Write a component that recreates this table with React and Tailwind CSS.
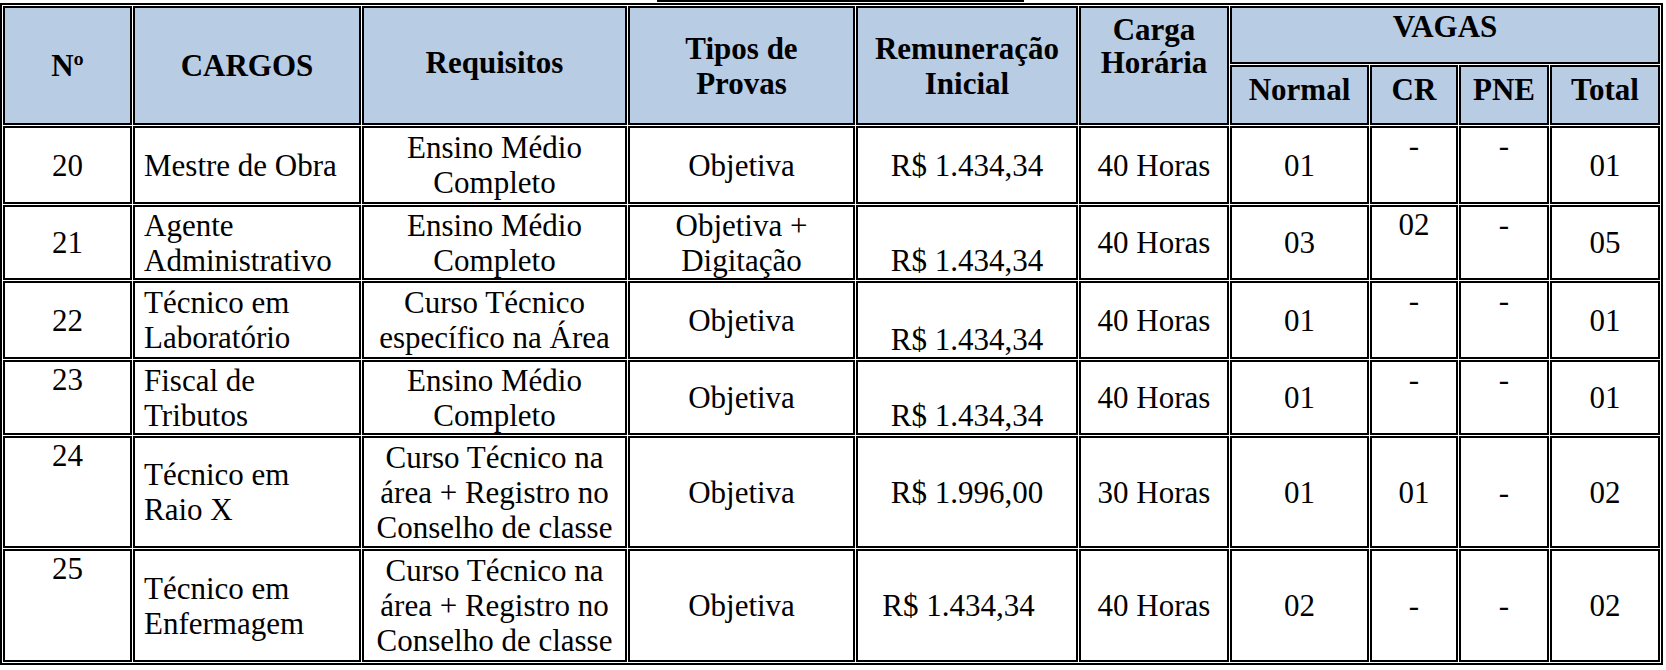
const va = { top: "align-top", middle: "align-middle", bottom: "align-bottom" };

const rows = [
  {
    h: "h-[78px]",
    n: "20", nAlign: "middle",
    cargo: ["Mestre de Obra"], cargoAlign: "middle",
    req: ["Ensino Médio", "Completo"],
    prova: ["Objetiva"],
    rem: "R$ 1.434,34", remAlign: "middle", remShift: false,
    carga: "40 Horas",
    normal: "01", cr: "-", crAlign: "top", pne: "-", pneAlign: "top", total: "01",
  },
  {
    h: "h-[75px]",
    n: "21", nAlign: "middle",
    cargo: ["Agente", "Administrativo"], cargoAlign: "middle",
    req: ["Ensino Médio", "Completo"],
    prova: ["Objetiva +", "Digitação"],
    rem: "R$ 1.434,34", remAlign: "bottom", remShift: false,
    carga: "40 Horas",
    normal: "03", cr: "02", crAlign: "top", pne: "-", pneAlign: "top", total: "05",
  },
  {
    h: "h-[78px]",
    n: "22", nAlign: "middle",
    cargo: ["Técnico em", "Laboratório"], cargoAlign: "middle",
    req: ["Curso Técnico", "específico na Área"],
    prova: ["Objetiva"],
    rem: "R$ 1.434,34", remAlign: "bottom", remShift: false,
    carga: "40 Horas",
    normal: "01", cr: "-", crAlign: "top", pne: "-", pneAlign: "top", total: "01",
  },
  {
    h: "h-[75px]",
    n: "23", nAlign: "top",
    cargo: ["Fiscal de", "Tributos"], cargoAlign: "middle",
    req: ["Ensino Médio", "Completo"],
    prova: ["Objetiva"],
    rem: "R$ 1.434,34", remAlign: "bottom", remShift: false,
    carga: "40 Horas",
    normal: "01", cr: "-", crAlign: "top", pne: "-", pneAlign: "top", total: "01",
  },
  {
    h: "h-[112px]",
    n: "24", nAlign: "top",
    cargo: ["Técnico em", "Raio X"], cargoAlign: "middle",
    req: ["Curso Técnico na", "área + Registro no", "Conselho de classe"],
    prova: ["Objetiva"],
    rem: "R$ 1.996,00", remAlign: "middle", remShift: false,
    carga: "30 Horas",
    normal: "01", cr: "01", crAlign: "middle", pne: "-", pneAlign: "middle", total: "02",
  },
  {
    h: "h-[113px]",
    n: "25", nAlign: "top",
    cargo: ["Técnico em", "Enfermagem"], cargoAlign: "middle",
    req: ["Curso Técnico na", "área + Registro no", "Conselho de classe"],
    prova: ["Objetiva"],
    rem: "R$ 1.434,34", remAlign: "middle", remShift: true,
    carga: "40 Horas",
    normal: "02", cr: "-", crAlign: "middle", pne: "-", pneAlign: "middle", total: "02",
  },
];

function Lines({ items }) {
  return items.map((t, i) => (
    <span key={i}>
      {i > 0 && <br />}
      {t}
    </span>
  ));
}

const cell = "border-2 border-black p-0";
const head = "border-2 border-black p-0 bg-[#b8cce4] font-bold text-center";

export default function App() {
  return (
    <div className="w-[1666px] h-[670px] overflow-hidden bg-white text-black font-['Liberation_Serif','Times_New_Roman',serif]">
      <div className="ml-[657px] h-[2px] w-[367px] bg-black" />
      <table className="mt-[1px] table-fixed border-separate border-spacing-[1px] border-2 border-black text-[31px] leading-[35px]">
        <colgroup>
          <col className="w-[129px]" />
          <col className="w-[228px]" />
          <col className="w-[265px]" />
          <col className="w-[227px]" />
          <col className="w-[222px]" />
          <col className="w-[150px]" />
          <col className="w-[139px]" />
          <col className="w-[88px]" />
          <col className="w-[90px]" />
          <col className="w-[110px]" />
        </colgroup>
        <thead>
          <tr className="h-[58px]">
            <th rowSpan={2} className={`${head} align-middle`}>Nº</th>
            <th rowSpan={2} className={`${head} align-middle`}>CARGOS</th>
            <th rowSpan={2} className={`${head} align-middle pb-[6px]`}>Requisitos</th>
            <th rowSpan={2} className={`${head} align-middle`}>
              Tipos de<br />Provas
            </th>
            <th rowSpan={2} className={`${head} align-middle`}>
              Remuneração<br />Inicial
            </th>
            <th rowSpan={2} className={`${head} align-top pt-[5px] leading-[33px]`}>
              Carga<br />Horária
            </th>
            <th colSpan={4} className={`${head} align-top pt-[1px]`}>VAGAS</th>
          </tr>
          <tr className="h-[60px]">
            <th className={`${head} align-top pt-[5px]`}>Normal</th>
            <th className={`${head} align-top pt-[5px]`}>CR</th>
            <th className={`${head} align-top pt-[5px]`}>PNE</th>
            <th className={`${head} align-top pt-[5px]`}>Total</th>
          </tr>
        </thead>
        <tbody>
          {rows.map((r) => (
            <tr key={r.n} className={r.h}>
              <td className={`${cell} text-center ${va[r.nAlign]}`}>{r.n}</td>
              <td className={`${cell} text-left pl-[9px] ${va[r.cargoAlign]}`}>
                <Lines items={r.cargo} />
              </td>
              <td className={`${cell} text-center align-middle`}>
                <Lines items={r.req} />
              </td>
              <td className={`${cell} text-center align-middle`}>
                <Lines items={r.prova} />
              </td>
              <td className={`${cell} text-center ${va[r.remAlign]} ${r.remShift ? "pr-[17px]" : ""}`}>
                {r.rem}
              </td>
              <td className={`${cell} text-center align-middle`}>{r.carga}</td>
              <td className={`${cell} text-center align-middle`}>{r.normal}</td>
              <td className={`${cell} text-center ${va[r.crAlign]}`}>{r.cr}</td>
              <td className={`${cell} text-center ${va[r.pneAlign]}`}>{r.pne}</td>
              <td className={`${cell} text-center align-middle`}>{r.total}</td>
            </tr>
          ))}
        </tbody>
      </table>
    </div>
  );
}
